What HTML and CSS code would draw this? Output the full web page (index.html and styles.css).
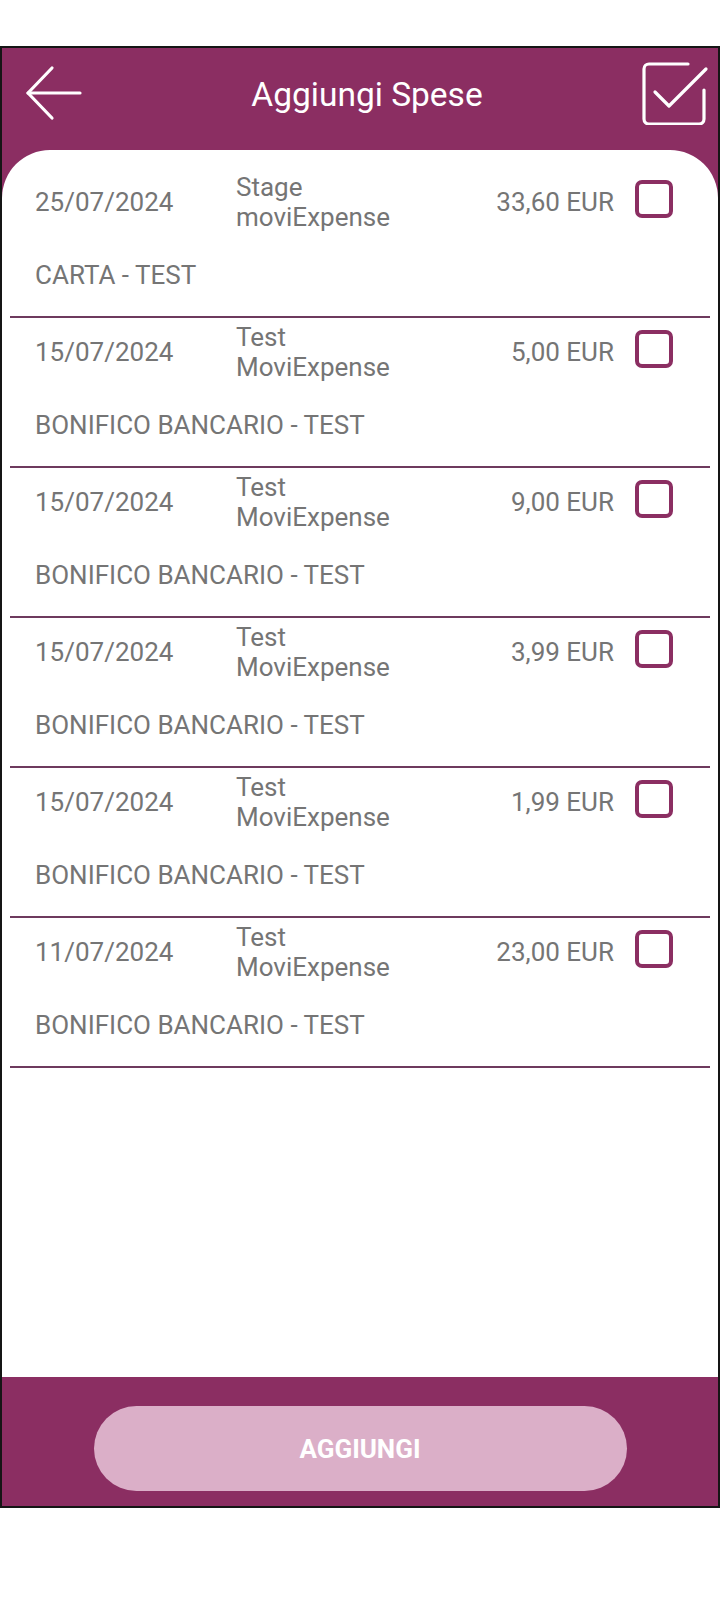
FILE: index.html
```html
<!DOCTYPE html>
<html lang="it">
<head>
<meta charset="utf-8">
<title>Aggiungi Spese</title>
<link rel="stylesheet" href="styles.css">
</head>
<body>
<div class="phone">
  <header class="topbar">
    <svg class="back" width="58" height="58" viewBox="0 0 58 58" fill="none" stroke="#fff" stroke-width="3.2" stroke-linecap="round" stroke-linejoin="round">
      <path d="M3 29 H55"/>
      <path d="M27 4 L3 29 L27 54"/>
    </svg>
    <h1 class="title">Aggiungi Spese</h1>
    <svg class="check" width="68" height="66" viewBox="0 0 68 66" fill="none" stroke="#fff" stroke-width="3.2" stroke-linecap="round" stroke-linejoin="round">
      <path d="M47 5 H8 a5 5 0 0 0 -5 5 V60 a5 5 0 0 0 5 5 H58 a5 5 0 0 0 5 -5 V31"/>
      <path d="M14 33 L28 47 L65 10"/>
    </svg>
  </header>

  <main class="card">
    <ul class="list">
      <li class="item">
        <div class="row">
          <span class="date">25/07/2024</span>
          <span class="desc">Stage<br>moviExpense</span>
          <span class="amount">33,60 EUR</span>
          <span class="box"></span>
        </div>
        <div class="method">CARTA - TEST</div>
      </li>
      <li class="item">
        <div class="row">
          <span class="date">15/07/2024</span>
          <span class="desc">Test<br>MoviExpense</span>
          <span class="amount">5,00 EUR</span>
          <span class="box"></span>
        </div>
        <div class="method">BONIFICO BANCARIO - TEST</div>
      </li>
      <li class="item">
        <div class="row">
          <span class="date">15/07/2024</span>
          <span class="desc">Test<br>MoviExpense</span>
          <span class="amount">9,00 EUR</span>
          <span class="box"></span>
        </div>
        <div class="method">BONIFICO BANCARIO - TEST</div>
      </li>
      <li class="item">
        <div class="row">
          <span class="date">15/07/2024</span>
          <span class="desc">Test<br>MoviExpense</span>
          <span class="amount">3,99 EUR</span>
          <span class="box"></span>
        </div>
        <div class="method">BONIFICO BANCARIO - TEST</div>
      </li>
      <li class="item">
        <div class="row">
          <span class="date">15/07/2024</span>
          <span class="desc">Test<br>MoviExpense</span>
          <span class="amount">1,99 EUR</span>
          <span class="box"></span>
        </div>
        <div class="method">BONIFICO BANCARIO - TEST</div>
      </li>
      <li class="item">
        <div class="row">
          <span class="date">11/07/2024</span>
          <span class="desc">Test<br>MoviExpense</span>
          <span class="amount">23,00 EUR</span>
          <span class="box"></span>
        </div>
        <div class="method">BONIFICO BANCARIO - TEST</div>
      </li>
    </ul>
  </main>

  <footer class="bottombar">
    <button class="add">AGGIUNGI</button>
  </footer>
</div>
</body>
</html>
```

FILE: styles.css
```css
* { box-sizing: border-box; }

html, body {
  margin: 0;
  padding: 0;
  background: #fff;
  font-family: Roboto, "Liberation Sans", sans-serif;
}

.phone {
  margin-top: 46px;
  height: 1462px;
  border: 2px solid #151515;
  display: flex;
  flex-direction: column;
  background: #8b2e62;
  box-shadow: 0 1px 0 #c9c9c9;
}

.topbar {
  height: 102px;
  flex: none;
  display: flex;
  align-items: center;
  padding: 0 9px 12px 23px;
}

.back {
  flex: none;
  display: block;
  margin-top: 0;
}

.title {
  flex: 1;
  margin: 0;
  padding-left: 10px;
  text-align: center;
  color: #fff;
  font-weight: 400;
  font-size: 33.5px;
  line-height: 40px;
  position: relative;
  top: 2px;
}

.check {
  flex: none;
  display: block;
  margin-top: -2px;
}

.card {
  flex: 1;
  background: #fff;
  border-radius: 48px 48px 0 0;
  padding: 18px 8px 0;
}

.list {
  list-style: none;
  margin: 0;
  padding: 0;
}

.item {
  padding: 4px 0 26px 25px;
  border-bottom: 2px solid #6e3a5e;
  color: #757575;
  font-size: 26px;
}

.row {
  display: flex;
  align-items: center;
  height: 60px;
}

.date {
  width: 201px;
  flex: none;
  line-height: 30px;
}

.desc {
  flex: 1;
  line-height: 30px;
}

.amount {
  flex: none;
  line-height: 30px;
  text-align: right;
}

.box {
  flex: none;
  width: 38px;
  height: 38px;
  margin: -6px 37px 0 21px;
  border: 4.5px solid #8b2e62;
  border-radius: 7px;
}

.method {
  margin-top: 28px;
  line-height: 30px;
}

.bottombar {
  height: 129px;
  flex: none;
  display: flex;
  justify-content: center;
  padding-top: 29px;
}

.add {
  width: 533px;
  height: 85px;
  border: none;
  border-radius: 43px;
  background: #dbafc8;
  color: #fff;
  font-family: Roboto, "Liberation Sans", sans-serif;
  font-weight: 700;
  font-size: 26px;
  padding: 0;
}
```
